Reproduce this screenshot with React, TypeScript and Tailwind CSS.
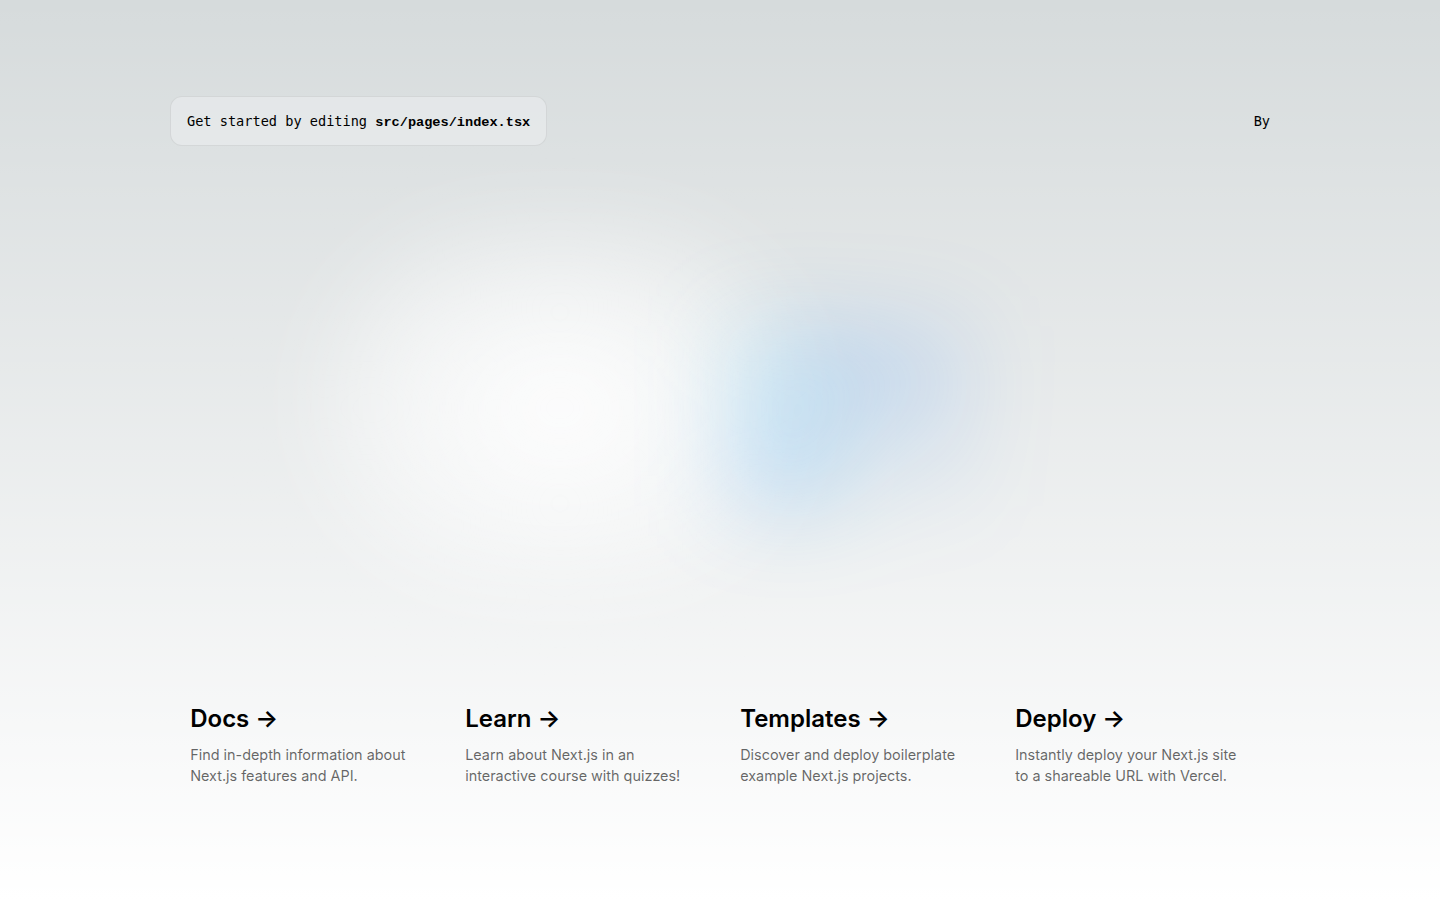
const cards = [
  {
    title: "Docs",
    text: "Find in-depth information about Next.js features and API.",
  },
  {
    title: "Learn",
    text: "Learn about Next.js in an interactive course with quizzes!",
  },
  {
    title: "Templates",
    text: "Discover and deploy boilerplate example Next.js projects.",
  },
  {
    title: "Deploy",
    text: "Instantly deploy your Next.js site to a shareable URL with Vercel.",
  },
];

export default function App() {
  return (
    <div className="min-h-screen bg-[#d6dbdc] bg-[linear-gradient(to_bottom,transparent,#ffffff)] text-black">
      <main className="flex min-h-screen flex-col items-center justify-between p-24">
        <div className="z-10 flex w-full max-w-[1100px] items-center justify-between font-['DejaVu_Sans_Mono',monospace] text-[13.6px]">
          <p className="rounded-xl border border-[#acafb0]/30 bg-[#eef0f1]/50 px-4 pt-[17px] pb-[15px] leading-[14px]">
            Get started by editing <code className="font-bold">src/pages/index.tsx</code>
          </p>
          <div className="flex items-center justify-end">
            <a href="#" className="flex items-center gap-2">
              By
            </a>
          </div>
        </div>

        {/* glow blobs */}
        <div className="relative w-full max-w-[1100px] flex-1">
          <div className="absolute left-1/2 top-[82px] -ml-[400px] h-[360px] w-[480px] rounded-full bg-[radial-gradient(rgba(255,255,255,1),rgba(255,255,255,0))] blur-[45px]" />
          <div className="absolute left-1/2 top-[180px] ml-[8px] h-[180px] w-[240px] bg-[conic-gradient(from_180deg_at_50%_50%,#16abff33_0deg,#0885ff33_55deg,#54d6ff33_120deg,#0071ff33_160deg,transparent_360deg)] blur-[45px]" />
        </div>

        <div className="grid w-full max-w-[1100px] grid-cols-4 font-['Inter',sans-serif]">
          {cards.map((c) => (
            <a
              key={c.title}
              href="#"
              className="rounded-xl border border-transparent px-[19.2px] py-4"
            >
              <h2 className="mb-[11.2px] text-2xl font-semibold leading-[normal]">
                {c.title} <span className="inline-block">-&gt;</span>
              </h2>
              <p className="m-0 max-w-[230px] text-[14.4px] leading-normal text-black/60">
                {c.text}
              </p>
            </a>
          ))}
        </div>
      </main>
    </div>
  );
}
